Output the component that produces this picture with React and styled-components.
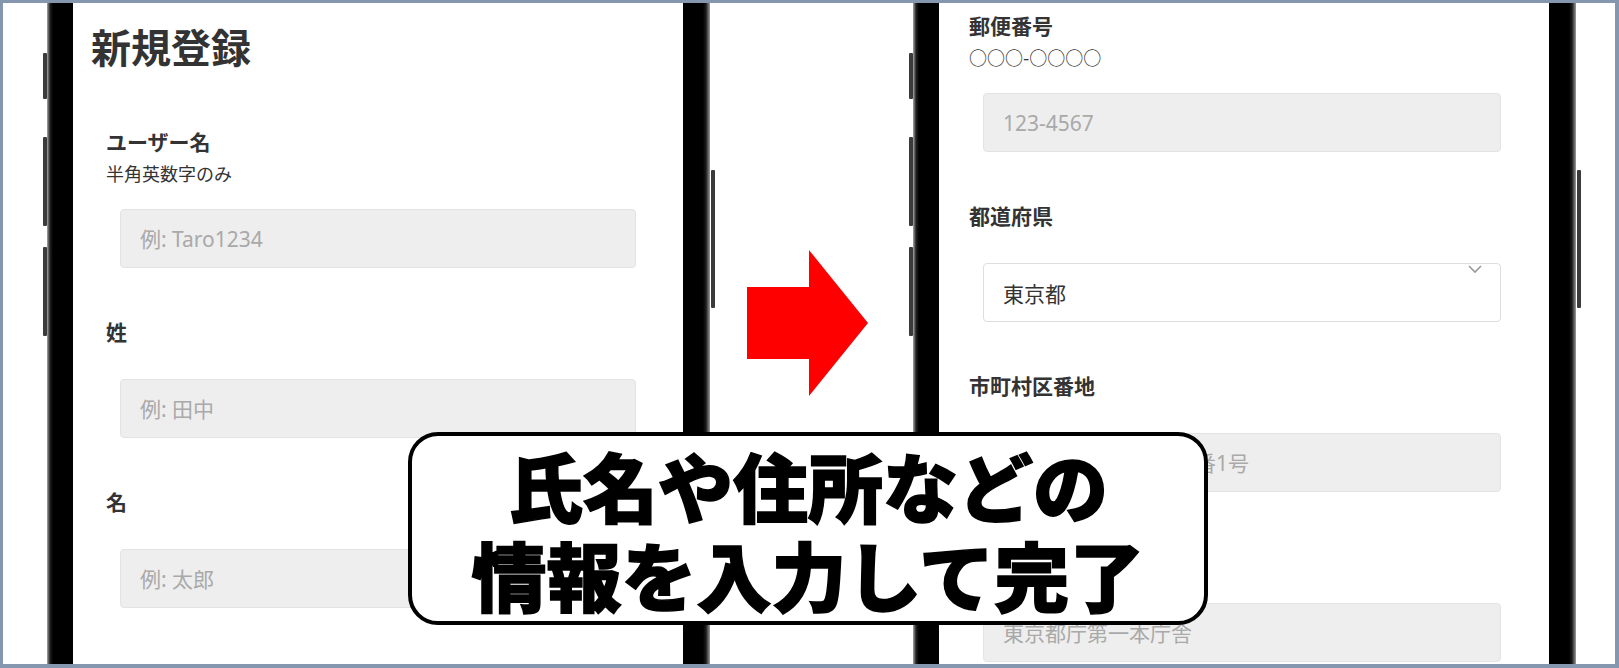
import styled, { createGlobalStyle } from "styled-components";

const GlobalStyle = createGlobalStyle`
  html, body {
    margin: 0;
    padding: 0;
    background: #fff;
    overflow: hidden;
  }
  * {
    box-sizing: border-box;
  }
`;

const FONT = `"Noto Sans", "Noto Sans CJK JP", sans-serif`;

const Frame = styled.div`
  position: relative;
  display: flex;
  width: 1619px;
  height: 668px;
  padding-left: 44px;
  border-style: solid;
  border-color: #8597af;
  border-width: 3px 4px 4px 3px;
  background: #fff;
  overflow: hidden;
  font-family: ${FONT};
`;

const Phone = styled.div`
  position: relative;
  flex: 0 0 663px;
  height: 100%;
  padding: 0 27px 0 26px;
  background: linear-gradient(
    to right,
    #a8a8a8 0,
    #222 3px,
    #000 6px,
    #000 calc(100% - 7px),
    #1c1c1c calc(100% - 4px),
    #9c9c9c 100%
  );
`;

const SideKey = styled.span`
  position: absolute;
  top: ${(p) => p.$top}px;
  height: ${(p) => p.$h}px;
  width: 4px;
  ${(p) => (p.$side === "right" ? "right: -5px;" : "left: -4px;")}
  background: #3b3b3b;
  border-radius: 1px;
`;

const Screen = styled.div`
  height: 100%;
  padding-top: ${(p) => p.$top}px;
  background: #fff;
  color: #333;
  overflow: hidden;
`;

const Title = styled.h1`
  margin: 0 0 56px 18px;
  font-size: 40px;
  line-height: 48px;
  font-weight: 700;
  color: #333;
`;

const Form = styled.div`
  padding: 0 ${(p) => p.$r}px 0 ${(p) => p.$l}px;
`;

const Field = styled.div`
  margin-bottom: 50px;
`;

const Label = styled.div`
  font-size: 21px;
  line-height: 28px;
  font-weight: 700;
  color: #333;
`;

const Hint = styled.div`
  margin-top: 5px;
  font-family: "Noto Sans CJK JP", sans-serif;
  font-size: 18px;
  line-height: 24px;
  color: #333;
`;

const TextInput = styled.input`
  display: block;
  width: calc(100% - 28px);
  height: 59px;
  margin: ${(p) => (p.$hint ? 24 : 33)}px 14px 0;
  padding: 0 19px;
  border: 1px solid #e3e3e3;
  border-radius: 4px;
  background: #eeeeee;
  font-family: ${FONT};
  font-size: 21px;
  color: #333;
  outline: none;

  &::placeholder {
    color: #a9a9a9;
  }
`;

const SelectBox = styled.div`
  position: relative;
  display: flex;
  align-items: center;
  height: 59px;
  margin: 33px 14px 0;
  padding: 0 19px;
  border: 1px solid #dedede;
  border-radius: 4px;
  background: #fff;
  font-size: 21px;
  color: #333;
`;

const Chevron = styled.svg`
  position: absolute;
  top: 1px;
  right: 18px;
`;

const Gutter = styled.div`
  flex: 0 0 203px;
  padding: 247px 0 0 37px;
`;

const Caption = styled.div`
  position: absolute;
  left: 405px;
  top: 429px;
  width: 800px;
  height: 193px;
  display: flex;
  flex-direction: column;
  align-items: center;
  justify-content: center;
  border: 4px solid #000;
  border-radius: 30px;
  background: #fff;
  font-family: "Noto Sans CJK JP", sans-serif;
  font-weight: 900;
  font-size: 75px;
  line-height: 89px;
  color: #000;
  -webkit-text-stroke: 1.5px #000;
`;

const CaptionLine = styled.span`
  display: block;
  white-space: nowrap;
`;

const leftFields = [
  { label: "ユーザー名", hint: "半角英数字のみ", ph: "例: Taro1234" },
  { label: "姓", ph: "例: 田中" },
  { label: "名", ph: "例: 太郎" },
];

const rightFields = [
  { label: "郵便番号", hint: "○○○-○○○○", ph: "123-4567" },
  { label: "都道府県", select: "東京都" },
  { label: "市町村区番地", ph: "新宿区西新宿2丁目8番1号" },
  { label: "建物名", ph: "東京都庁第一本庁舎" },
];

function Keys() {
  return (
    <>
      <SideKey $top={50} $h={46} />
      <SideKey $top={134} $h={89} />
      <SideKey $top={244} $h={89} />
      <SideKey $side="right" $top={167} $h={138} />
    </>
  );
}

function FormField({ f }) {
  return (
    <Field>
      <Label>{f.label}</Label>
      {f.hint && <Hint>{f.hint}</Hint>}
      {f.select ? (
        <SelectBox>
          {f.select}
          <Chevron width="14" height="9" viewBox="0 0 14 9">
            <polyline points="1,1 7,7 13,1" fill="none" stroke="#9a9a9a" strokeWidth="1.6" />
          </Chevron>
        </SelectBox>
      ) : (
        <TextInput readOnly $hint={!!f.hint} placeholder={f.ph} />
      )}
    </Field>
  );
}

export default function App() {
  return (
    <>
      <GlobalStyle />
      <Frame>
        <Phone>
          <Keys />
          <Screen $top={21}>
            <Title>新規登録</Title>
            <Form $l={33} $r={33}>
              {leftFields.map((f) => (
                <FormField key={f.label} f={f} />
              ))}
            </Form>
          </Screen>
        </Phone>

        <Gutter>
          <svg width="121" height="147" viewBox="0 0 121 147">
            <polygon points="0,37 62,37 62,0 121,73 62,146 62,109 0,109" fill="#ff0000" />
          </svg>
        </Gutter>

        <Phone>
          <Keys />
          <Screen $top={9}>
            <Form $l={30} $r={34}>
              {rightFields.map((f) => (
                <FormField key={f.label} f={f} />
              ))}
            </Form>
          </Screen>
        </Phone>

        <Caption>
          <CaptionLine>氏名や住所などの</CaptionLine>
          <CaptionLine>情報を入力して完了</CaptionLine>
        </Caption>
      </Frame>
    </>
  );
}
